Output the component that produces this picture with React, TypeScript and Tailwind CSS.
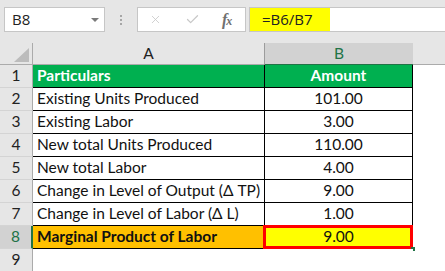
import { X, Check } from "lucide-react";

type Row = {
  n: number;
  a: string;
  b: string;
  kind?: "head" | "result" | "blank";
};

const rows: Row[] = [
  { n: 1, a: "Particulars", b: "Amount", kind: "head" },
  { n: 2, a: "Existing Units Produced", b: "101.00" },
  { n: 3, a: "Existing Labor", b: "3.00" },
  { n: 4, a: "New total Units Produced", b: "110.00" },
  { n: 5, a: "New total Labor", b: "4.00" },
  { n: 6, a: "Change in Level of Output (\u0394 TP)", b: "9.00" },
  { n: 7, a: "Change in Level of Labor (\u0394 L)", b: "1.00" },
  { n: 8, a: "Marginal Product of Labor", b: "9.00", kind: "result" },
  { n: 9, a: "", b: "", kind: "blank" },
];

const uiFont = "font-['Open_Sans','Noto_Sans',sans-serif]";
const cellFont = "font-['Lato','Liberation_Sans',sans-serif]";

export default function App() {
  return (
    <div className="w-[445px] h-[271px] overflow-hidden bg-white">
      {/* Formula bar */}
      <div className={`h-[43px] bg-[#e6e6e6] flex items-start pt-[7px] ${uiFont}`}>
        <div className="ml-[4px] w-[101px] h-[25px] bg-white border border-[#c6c6c6] flex items-center pl-[7px] pr-[5px] text-[15px] text-[#222]">
          <span className="flex-1">B8</span>
          <span className="w-0 h-0 border-l-[4px] border-r-[4px] border-t-[4px] border-l-transparent border-r-transparent border-t-[#7a7a7a]" />
        </div>
        <div className="w-[32px] h-[25px] flex flex-col items-center justify-center gap-[2px]">
          <span className="w-[2px] h-[2px] bg-[#a6a6a6]" />
          <span className="w-[2px] h-[2px] bg-[#a6a6a6]" />
          <span className="w-[2px] h-[2px] bg-[#a6a6a6]" />
        </div>
        <div className="w-[109px] h-[25px] bg-white border border-[#c6c6c6] flex items-center pl-[11px]">
          <X size={13} strokeWidth={1.5} className="text-[#c8c8c8]" />
          <Check size={15} strokeWidth={2} className="text-[#c8c8c8] ml-[23px]" />
          <span className="ml-[22px] font-['Liberation_Serif',serif] italic font-bold text-[16px] leading-none text-[#707070] tracking-[-1px]">
            f<span className="text-[12px]">x</span>
          </span>
        </div>
        <div className="ml-[3px] flex-1 h-[25px] bg-white border border-[#c6c6c6] border-r-0">
          <div className="w-[80px] h-full bg-[#ffff00] flex items-center pl-[12px] text-[15px] text-[#222]">
            =B6/B7
          </div>
        </div>
      </div>

      {/* Column headers */}
      <div className={`h-[22px] bg-[#e6e6e6] flex border-b border-[#ababab] ${cellFont} text-[15.5px] text-[#222]`}>
        <div className="w-[33px] h-full border-r border-[#ababab] flex items-end justify-end pr-[3px] pb-[2px]">
          <span className="w-0 h-0 border-b-[14px] border-l-[15px] border-b-[#bcbcbc] border-l-transparent" />
        </div>
        <div className="w-[231px] h-full flex items-center justify-center">A</div>
        <div className="w-[149px] h-[23px] bg-[#d2d2d2] border-l border-[#9c9c9c] border-b-2 border-b-[#217346] flex items-center justify-center text-[#217346]">
          B
        </div>
      </div>

      {/* Grid */}
      <div className={`${cellFont} text-[15.5px] text-[#111]`}>
        {rows.map((row) => {
          const selected = row.kind === "result";
          const headerCls = selected
            ? "bg-[#d2d2d2] text-[#217346] border-r-2 border-r-[#217346]"
            : "bg-[#e6e6e6] text-[#222] border-r border-r-[#ababab]";
          const rowBorder = row.kind === "blank" ? "" : "border-b border-black";
          let aCls = "bg-white";
          let bCls = "bg-white";
          if (row.kind === "head") {
            aCls = "bg-[#00b050] text-white font-bold";
            bCls = "bg-[#00b050] text-white font-bold";
          } else if (selected) {
            aCls = "bg-[#ffc000] font-bold";
            bCls = "bg-[#ffff00]";
          }
          return (
            <div key={row.n} className="h-[23px] flex">
              <div
                className={`w-[33px] h-full flex items-center justify-center border-b border-b-[#d4d4d4] ${headerCls}`}
              >
                {row.n}
              </div>
              <div className={`w-[231px] h-full flex items-center pl-[4px] ${aCls} ${rowBorder}`}>
                {row.a}
              </div>
              <div
                className={`relative w-[149px] h-full flex items-center justify-center ${bCls} ${
                  row.kind === "blank" ? "" : "border-l border-r border-black"
                } ${rowBorder}`}
              >
                {row.b}
                {selected && (
                  <>
                    <div className="absolute -left-[2px] -top-[1px] -right-[1px] -bottom-[1px] border-[3px] border-[#ff0000]" />
                    <div className="absolute -right-[3px] -bottom-[3px] w-[4px] h-[4px] bg-[#217346]" />
                  </>
                )}
              </div>
            </div>
          );
        })}
      </div>
    </div>
  );
}
